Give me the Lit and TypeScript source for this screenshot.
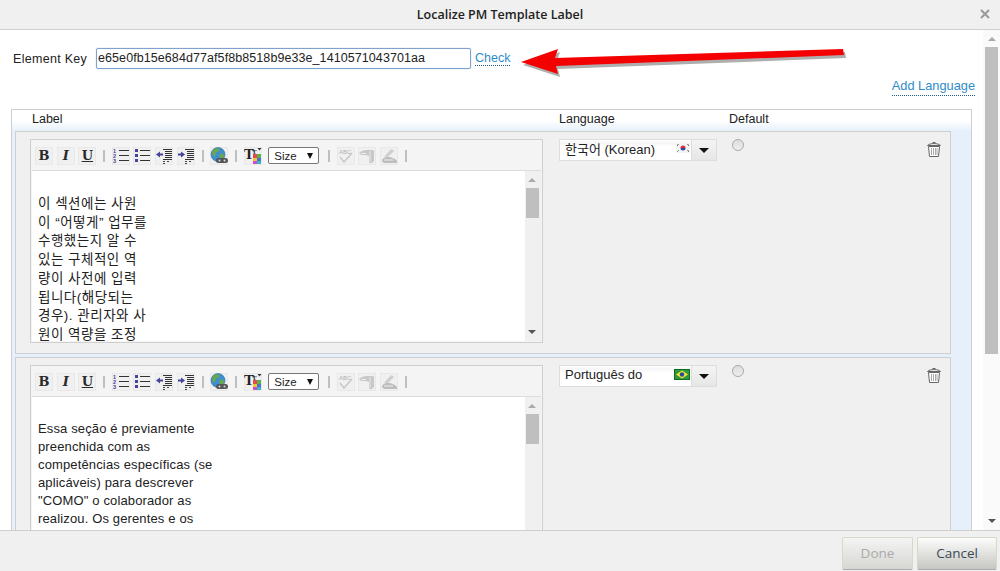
import { LitElement, html, css, svg } from "lit";
import { customElement } from "lit/decorators.js";

const koLines = ["이 섹션에는 사원", "이 “어떻게” 업무를", "수행했는지 알 수", "있는 구체적인 역", "량이 사전에 입력", "됩니다(해당되는", "경우). 관리자와 사", "원이 역량을 조정"];
const ptLines = ["Essa seção é previamente", "preenchida com as", "competências específicas (se", "aplicáveis) para descrever", "\"COMO\" o colaborador as", "realizou. Os gerentes e os"];

const lines = (rows: number[][], c = "#333") => svg`${rows.map(([x1, y, x2]) => svg`<line x1=${x1} y1=${y + 0.5} x2=${x2} y2=${y + 0.5} stroke=${c} />`)}`;
const stripes = svg`${lines([[8, 2, 17], [10, 4, 17], [10, 6, 17], [10, 8, 17], [10, 10, 17], [8, 12, 17]])}<path d="M8 14.500h2M8 16.500h2M12 14.500h2" stroke="#444" fill="none"/>`;

const icons = {
  ol: html`<svg width="18" height="17" viewBox="0 0 18 17">${lines([[7, 3, 17], [7, 8, 17], [7, 13, 17]])}<text x="1" y="6" class="num">1</text><text x="1" y="11" class="num">2</text><text x="1" y="16" class="num">3</text></svg>`,
  ul: html`<svg width="18" height="17" viewBox="0 0 18 17"><rect x="2" y="2" width="3" height="3" fill="#44449a"/><rect x="2" y="7" width="3" height="3" fill="#44449a"/><rect x="2" y="12" width="3" height="3" fill="#44449a"/>${lines([[7, 3, 17], [7, 8, 17], [7, 13, 17]])}</svg>`,
  outdent: html`<svg width="18" height="17" viewBox="0 0 18 17">${stripes}<path d="M1 7.500 5 4.500v2h3v2H5v2z" fill="#44449a"/></svg>`,
  indent: html`<svg width="18" height="17" viewBox="0 0 18 17">${stripes}<path d="M8 7.500 4 4.500v2H1v2h3v2z" fill="#44449a"/></svg>`,
  globe: html`<svg width="18" height="17" viewBox="0 0 18 17"><circle cx="8" cy="7.500" r="7" fill="#3f8fd0" stroke="#2d6c9f" stroke-width=".6"/><path d="M3 3c2-2 5-2 6-1s0 3-2 3-1 3-2 4-3-1-3-3zM10 7c2-1 4 0 4 2s-2 3-3 3-2-3-1-5z" fill="#6aa84f"/><rect x="6" y="11" width="12" height="5" rx="2.500" fill="#555"/><circle cx="9.500" cy="13.500" r="1" fill="#ddd"/><circle cx="14.500" cy="13.500" r="1" fill="#ddd"/></svg>`,
  color: html`<svg width="18" height="18" viewBox="0 0 18 18"><text x="0" y="12" class="tt">T</text><text x="8" y="7" class="tt2">T</text><path d="M13.500 1h4l-2 2.500z" fill="#333"/><rect x="9" y="7" width="4" height="4" fill="#e64a4a"/><rect x="13" y="7" width="4" height="4" fill="#58b44a"/><rect x="9" y="11" width="4" height="3" fill="#f2c230"/><rect x="13" y="11" width="4" height="3" fill="#4a70d8"/><rect x="9" y="14" width="4" height="3" fill="#d04ad0"/><rect x="13" y="14" width="4" height="3" fill="#39b6c4"/></svg>`,
  spell: html`<svg width="18" height="17" viewBox="0 0 18 17"><text x="2" y="7" class="abc">ABC</text><path d="M3 10l4 5 8-9" fill="none" stroke="#c8c8c8" stroke-width="1.500"/></svg>`,
  paste: html`<svg width="18" height="17" viewBox="0 0 18 17"><path d="M1 6c2-2 5-3 8-3h6l1 1v10l-2 2h-3V9L8 8H3z" fill="#c8c8c8"/><path d="M12 4v11" stroke="#e8e8e8"/><path d="M3 6.500h5" stroke="#eee"/></svg>`,
  wipe: html`<svg width="18" height="17" viewBox="0 0 18 17"><path d="M4 10 11 2l2 1 1 1-6 6z" fill="#cfcfcf"/><path d="M2 13c1-2 3-3 5-3h3l5 2 2 2v2H5c-2 0-3-1-3-3z" fill="#bdbdbd"/><path d="M4 13h9" stroke="#eee"/></svg>`,
};

const korea = html`<svg class="flag" width="14" height="10" viewBox="1 0 14 10"><rect x="1" width="14" height="10" fill="#f4f4f4"/><path d="M5.500 5a2.500 2.500 0 0 1 5 0z" fill="#e0283c"/><path d="M5.500 5a2.500 2.500 0 0 0 5 0z" fill="#2a4ea8"/><g stroke="#333"><path d="M2 2.500l1.500-1M2.500 8.500l1-1M12.500 1.500l1.500 1M12.500 7.500l1.500 1"/></g></svg>`;
const brazil = html`<svg class="flag" width="16" height="11" viewBox="0 0 16 11"><rect width="16" height="11" fill="#0f6b22"/><rect x="1" y="1" width="14" height="9" fill="#2f9a3a"/><path d="M8 1.500 14 5.500 8 9.500 2 5.500z" fill="#f2e33a"/><circle cx="8" cy="5.500" r="2.200" fill="#2a4a9c"/></svg>`;
const trash = html`<svg class="trash" width="16" height="17" viewBox="0 0 16 17"><path d="M1.500 4.500C3 2 13 2 14.500 4.500z" fill="#fff" stroke="#666"/><path d="M6 2.500c1-1.500 3-1.500 4 0" fill="none" stroke="#666"/><path d="M2.500 5.500h11l-1 10h-9z" fill="#fff" stroke="#666"/><path d="M5.500 7v7M7.500 7v7M9.500 7v7M11 7v7" stroke="#aaa"/></svg>`;

@customElement("app-root")
export class AppRoot extends LitElement {
  static styles = css`
    :host { display: flex; flex-direction: column; position: relative; width: 1000px; height: 571px; overflow: hidden; background: #fff; font: 12.500px "Liberation Sans", Arial, sans-serif; color: #222; }
    .head { flex: none; height: 29px; display: flex; align-items: center; justify-content: center; position: relative; background: #f0f0f0; border-bottom: 1px solid #cfcfcf; font: 600 12.500px "Open Sans", sans-serif; color: #222; }
    .close { position: absolute; right: 9px; top: 8px; }
    .main { flex: 1; min-height: 0; display: flex; }
    .content { flex: 1; min-width: 0; overflow: hidden; padding: 18px 11px 0; }
    .key { display: flex; align-items: center; height: 21px; margin-left: 2px; }
    .key label { width: 83px; letter-spacing: .3px; }
    .key .input { height: 19px; line-height: 19px; border: 1px solid #7da2ce; border-radius: 2px; box-shadow: 0 0 1px #7da2ce; padding-left: 1px; box-sizing: content-box; margin-right: 4px; width: 372px; letter-spacing: .08px; }
    .link { color: #2f8ccc; border-bottom: 1px dotted #1b5c8c; line-height: 14px; }
    .add { display: flex; justify-content: flex-end; margin: 10px -3px 0 0; height: 17px; font-size: 12.800px; }
    .table { margin-top: 13px; border: 1px solid #cfcfcf; background: #e6f0fa; padding-bottom: 40px; width: 959px; }
    .thead { height: 21px; box-sizing: border-box; padding: 0 0 4px 20px; display: flex; align-items: center; background: linear-gradient(#fff 50%, #e6f0fa); }
    .thead span:nth-child(1) { width: 527px; }
    .thead span:nth-child(2) { width: 170px; }
    .card { width: 934px; margin: 0 0 3px 3px; height: 221px; border: 1px solid #cfcfcf; background: #f0f0f0; display: flex; }
    .editor { flex: none; width: 509px; height: 200px; margin: 7px 0 0 14px; border: 1px solid #cfcfcf; padding: 1px; background: #f4f4f4; display: flex; flex-direction: column; }
    .tools { flex: none; height: 29px; display: flex; align-items: center; gap: 3.700px; padding: 0 0 0 3px; border-bottom: 1px solid #dcdcdc; }
    .btn { flex: none; width: 18px; height: 18px; display: flex; align-items: center; justify-content: center; background: #f0f0f0; box-shadow: inset 0 0 0 1px #e8e8e8; font: 700 13px "DejaVu Serif", serif; color: #2a2a2a; }
    .btn.i { font-style: italic; }
    .btn.u { text-decoration: underline; }
    .sep { flex: none; width: 2px; height: 12px; background: #bcc0c4; margin: 0 3px; }
    .sizesel { flex: none; height: 15px; margin: 0 2px 0 3px; background: #fff; border: 1px solid #777; border-radius: 2px; display: flex; align-items: center; justify-content: space-between; padding: 0 5px; box-sizing: content-box; width: 39px; font-size: 11.500px; }
    .tri { width: 0; height: 0; border-left: 5px solid transparent; border-right: 5px solid transparent; border-top: 5px solid #111; }
    .sizesel .tri { border-left-width: 3px; border-right-width: 3px; border-top-width: 6px; }
    .edit { flex: 1; min-height: 0; display: flex; overflow: hidden; }
    .page { flex: 1; min-width: 0; background: #fff; overflow: hidden; font-family: "Liberation Sans", "Noto Sans CJK KR", sans-serif; color: #222; }
    .page.pt { font-size: 13px; letter-spacing: .14px; line-height: 18px; padding: 23px 0 0 6px; }
    .page.ko { font-size: 13.500px; letter-spacing: .5px; line-height: 18.700px; padding: 24px 0 0 6px; }
    .bar { flex: none; width: 14px; padding-right: 2px; background: #f0f0f0; display: flex; flex-direction: column; align-items: center; }
    .up { width: 0; height: 0; border-left: 4px solid transparent; border-right: 4px solid transparent; border-bottom: 4px solid #aaa; margin-top: 7px; }
    .dn { width: 0; height: 0; border-left: 4px solid transparent; border-right: 4px solid transparent; border-top: 4px solid #555; margin-bottom: 7px; }
    .thumb { width: 13px; height: 30px; margin-top: 6px; background: #bfbfbf; }
    .spacer { flex: 1; }
    .lang { flex: none; margin: 7px 0 0 16px; border: 1px solid #ddd; background: linear-gradient(#fff 0, #f6f6f6 15%, #fff 35%); display: flex; align-items: center; padding-left: 5px; box-sizing: border-box; width: 158px; height: 22px; }
    .lang .txt { flex: 1; font-size: 13px; padding-bottom: 3px; font-family: "Liberation Sans", "Noto Sans CJK KR", sans-serif; }
    .lang .arrow { flex: none; width: 25px; height: 20px; box-sizing: border-box; background: linear-gradient(#f4f4f4, #e6e6e6); border-left: 1px solid #ddd; display: flex; align-items: center; justify-content: center; margin-left: 1px; }
    .flag { flex: none; margin-bottom: 4px; }
    .radio { flex: none; width: 10px; height: 10px; margin: 7px 0 0 15px; border: 1px solid #aaa; border-radius: 50%; background: linear-gradient(#ddd, #eee); }
    .trash { flex: none; margin: 9px 0 0 182px; }
    .scroll { flex: none; width: 17px; background: #fafafa; display: flex; flex-direction: column; align-items: center; }
    .scroll .thumb { width: 13px; height: 307px; margin-top: 6px; }
    .foot { flex: none; box-sizing: content-box; background: #f0f0f0; border-top: 1px solid #cfcfcf; display: flex; justify-content: flex-end; align-items: flex-start; gap: 4px; padding: 6px 3px 0 0; height: 34px; }
    .foot button { height: 33px; font: 13.500px "Open Sans", sans-serif; border: 1px solid #d8d8c8; border-bottom-color: #aaa; border-radius: 2px; padding: 0 0 2px; background: linear-gradient(#fcfcfc, #c6c6c2); color: #3a4a55; }
    .foot .done { width: 71px; color: #aaa; background: linear-gradient(#f4f4f4, #d6d6d2); }
    .cancel { width: 80px; }
    .overlay { position: absolute; left: 0; top: 0; pointer-events: none; }
    text.num { font: 700 5.500px "Liberation Sans", sans-serif; fill: #44449a; }
    text.tt { font: 700 15px "Liberation Serif", serif; fill: #222; }
    text.tt2 { font: 700 7px "Liberation Serif", serif; fill: #333; }
    text.abc { font: 6px "Liberation Sans", sans-serif; fill: #b0b0b0; }
  `;

  private editor(rows: string[], cls: string) {
    const b = (l: string, c = "") => html`<span class="btn ${c}">${l}</span>`;
    const ic = (i: unknown) => html`<span class="btn">${i}</span>`;
    const sep = html`<span class="sep"></span>`;
    return html`<div class="editor">
      <div class="tools">
        ${b("B")}${b("I", "i")}${b("U", "u")}${sep}
        ${ic(icons.ol)}${ic(icons.ul)}${ic(icons.outdent)}${ic(icons.indent)}${sep}
        ${ic(icons.globe)}${sep}${ic(icons.color)}
        <span class="sizesel">Size<span class="tri"></span></span>${sep}
        ${ic(icons.spell)}${ic(icons.paste)}${ic(icons.wipe)}${sep}
      </div>
      <div class="edit">
        <div class="page ${cls}">${rows.map((r) => html`<div>${r}</div>`)}</div>
        <div class="bar"><span class="up"></span><span class="thumb"></span><span class="spacer"></span><span class="dn"></span></div>
      </div>
    </div>`;
  }

  private card(rows: string[], cls: string, name: string, flag: unknown) {
    return html`<div class="card">
      ${this.editor(rows, cls)}
      <div class="lang"><span class="txt">${name}</span>${flag}<span class="arrow"><span class="tri"></span></span></div>
      <span class="radio"></span>
      ${trash}
    </div>`;
  }

  render() {
    return html`
      <div class="head">Localize PM Template Label
        <svg class="close" width="12" height="12" viewBox="0 0 12 12"><path d="M2 2l8 8M10 2l-8 8" stroke="#999" stroke-width="2"/></svg>
      </div>
      <div class="main">
        <div class="content">
          <div class="key"><label>Element Key</label><span class="input">e65e0fb15e684d77af5f8b8518b9e33e_1410571043701aa</span><span class="link">Check</span></div>
          <div class="add"><span class="link">Add Language</span></div>
          <div class="table">
            <div class="thead"><span>Label</span><span>Language</span><span>Default</span></div>
            ${this.card(koLines, "ko", "한국어 (Korean)", korea)}
            ${this.card(ptLines, "pt", "Português do", brazil)}
          </div>
        </div>
        <div class="scroll"><span class="up"></span><span class="thumb"></span><span class="spacer"></span><span class="dn"></span></div>
      </div>
      <div class="foot"><button class="done">Done</button><button class="cancel">Cancel</button></div>
      <svg class="overlay" width="1000" height="100" viewBox="0 0 1000 100">
        <g fill="#6b6b6b" opacity=".55" transform="translate(2 3)"><path d="M521 62 558 49 555 58 843 49 844 55 556 66 558 74z"/></g>
        <path d="M521 62 558 49 555 58 843 49 844 55 556 66 558 74z" fill="#f50000"/>
      </svg>
    `;
  }
}
